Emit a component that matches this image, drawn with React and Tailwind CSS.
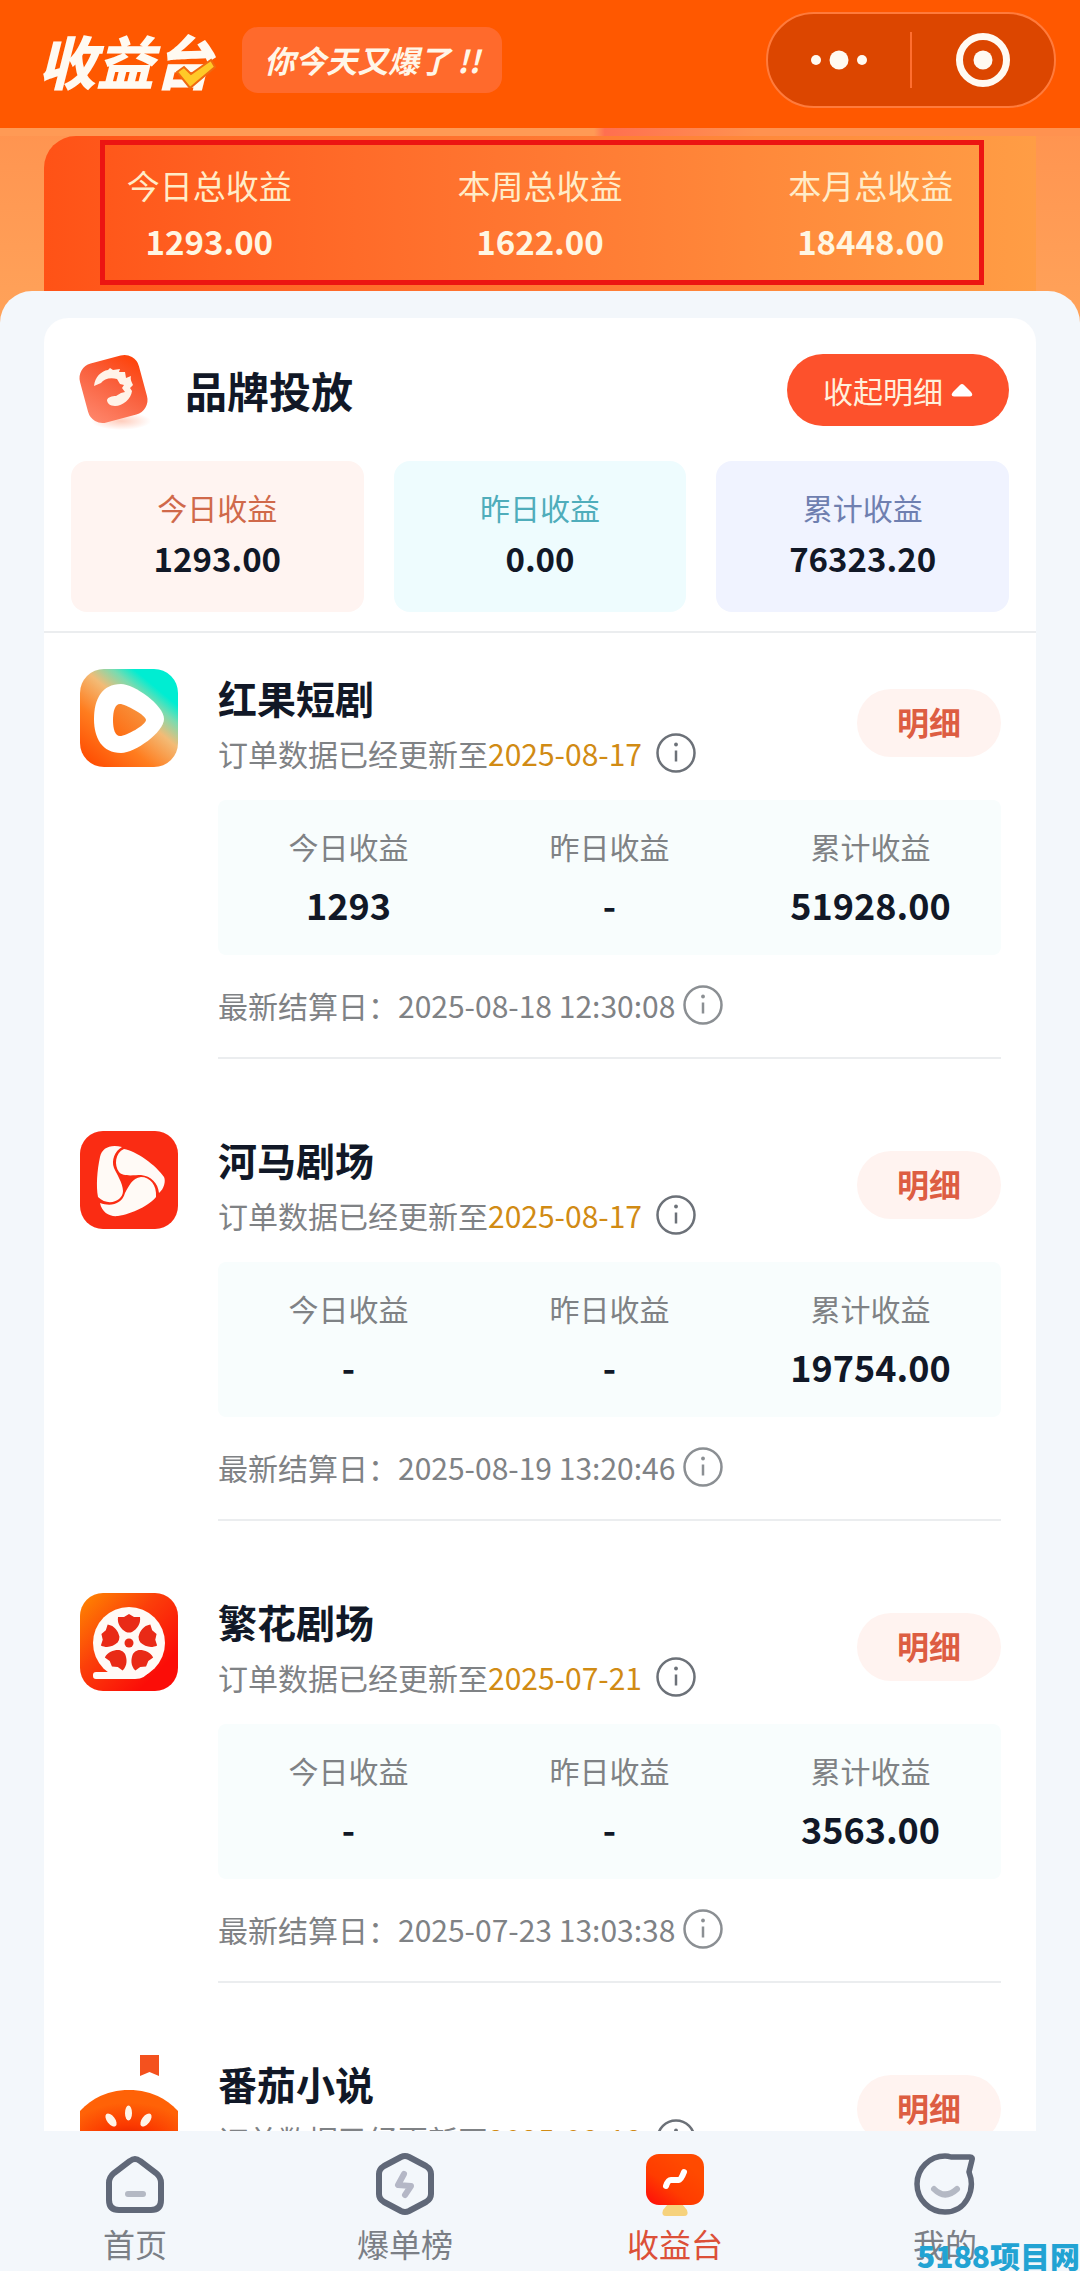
import { Fragment } from "react";

const totals = [
  { label: "今日总收益", value: "1293.00" },
  { label: "本周总收益", value: "1622.00" },
  { label: "本月总收益", value: "18448.00" },
];

const summary = [
  { label: "今日收益", value: "1293.00", box: "bg-[#fff4f1]", text: "text-[#d0694a]" },
  { label: "昨日收益", value: "0.00", box: "bg-[#eefcfe]", text: "text-[#4fadbb]" },
  { label: "累计收益", value: "76323.20", box: "bg-[#f0f3ff]", text: "text-[#6f7fb0]" },
];

const platforms = [
  {
    name: "红果短剧",
    icon: HongguoIcon,
    updated: "2025-08-17",
    figures: [["今日收益", "1293"], ["昨日收益", "-"], ["累计收益", "51928.00"]],
    settled: "2025-08-18 12:30:08",
  },
  {
    name: "河马剧场",
    icon: HemaIcon,
    updated: "2025-08-17",
    figures: [["今日收益", "-"], ["昨日收益", "-"], ["累计收益", "19754.00"]],
    settled: "2025-08-19 13:20:46",
  },
  {
    name: "繁花剧场",
    icon: FanhuaIcon,
    updated: "2025-07-21",
    figures: [["今日收益", "-"], ["昨日收益", "-"], ["累计收益", "3563.00"]],
    settled: "2025-07-23 13:03:38",
  },
  { name: "番茄小说", icon: FanqieIcon, updated: "2025-08-18" },
];

function BrandIcon() {
  return (
    <svg viewBox="0 0 80 80" className="size-20 shrink-0" aria-hidden="true">
      <defs>
        <linearGradient id="brand" x1="0" y1="1" x2="1" y2="0">
          <stop offset="0" stopColor="#ff8a70" />
          <stop offset="0.55" stopColor="#f9603d" />
          <stop offset="1" stopColor="#ff3d00" />
        </linearGradient>
        <radialGradient id="brandShadow">
          <stop offset="0" stopColor="#ff9a78" stopOpacity="0.5" />
          <stop offset="1" stopColor="#ff9a78" stopOpacity="0" />
        </radialGradient>
      </defs>
      <ellipse cx="50" cy="71" rx="30" ry="9" fill="url(#brandShadow)" />
      <rect x="12" y="8.500" width="61" height="61" rx="15" fill="url(#brand)" transform="rotate(-15 42.500 39)" />
      <path
        d="M23 36 C24 27 30 21 37 20 L39 18 L42 20 L49 19 L48 22 L54 22 L55 28 L60 26 C59 30 61 32 62 35 L59 38 L61 41 C60 49 52 56 44 56 C39 56 36 53 36 50 C37 47 41 46 45 46 L50 43 L54 42 L51 38 L53 35 L49 34 L46 29 C39 27 33 29 30 33 Z"
        fill="#fff3e8"
      />
    </svg>
  );
}

function HongguoIcon() {
  return (
    <svg viewBox="0 0 98 98" className="size-[98px]" aria-hidden="true">
      <defs>
        <linearGradient id="hongguo" x1="0.1" y1="1" x2="0.85" y2="0.1">
          <stop offset="0" stopColor="#ff4a00" />
          <stop offset="0.35" stopColor="#ff7d1f" />
          <stop offset="0.62" stopColor="#f3bb76" />
          <stop offset="0.78" stopColor="#7adbb0" />
          <stop offset="0.9" stopColor="#00edd2" />
        </linearGradient>
        <linearGradient id="hongguoPlay" x1="0" y1="1" x2="1" y2="0">
          <stop offset="0" stopColor="#ff6a10" />
          <stop offset="1" stopColor="#f59a45" />
        </linearGradient>
      </defs>
      <rect width="98" height="98" rx="24" fill="url(#hongguo)" />
      <path d="M41 15 C54 15 84 36 84 50 C84 63 55 84 41 84 C22 84 14 69 14 50 C14 30 22 15 41 15 Z" fill="#fff" />
      <path d="M40 35 C45 35 66 46 66 51 C66 56 46 67 40 67 C35 67 33 60 33 51 C33 42 35 35 40 35 Z" fill="url(#hongguoPlay)" />
    </svg>
  );
}

function HemaIcon() {
  return (
    <svg viewBox="0 0 98 98" className="size-[98px]" aria-hidden="true">
      <rect width="98" height="98" rx="23" fill="#fa2c13" />
      <g fill="#fffaf6">
        <path d="M42 16 C30 13 22 17 20 26 C17 40 16 55 18 66 C28 76 43 70 43 60 C43 52 36 42 34 37 C31 29 35 20 42 16 Z" />
        <path d="M44 18 C35 22 34 34 39 41 C43 46 54 44 61 44 C71 45 78 52 79 62 C84 58 86 50 84 46 C76 34 56 20 44 18 Z" />
        <path d="M61 46 C52 47 49 55 45 62 C42 73 31 76 20 72 C22 82 30 86 38 85 C52 83 70 74 76 66 C77 54 70 46 61 46 Z" />
      </g>
    </svg>
  );
}

function FanhuaIcon() {
  return (
    <svg viewBox="0 0 98 98" className="size-[98px]" aria-hidden="true">
      <defs>
        <linearGradient id="fanhua" x1="0" y1="0" x2="0.8" y2="0.8">
          <stop offset="0" stopColor="#ff8a00" />
          <stop offset="0.5" stopColor="#fb3f0a" />
          <stop offset="1" stopColor="#fb0d08" />
        </linearGradient>
      </defs>
      <rect width="98" height="98" rx="23" fill="url(#fanhua)" />
      <circle cx="49" cy="50" r="36" fill="#fffaf6" />
      <path d="M16 79 H60 L72 76 Q65 86 55 86 H16 Q13 86 13 83 V82 Q13 79 16 79 Z" fill="#fffaf6" />
      {[0, 72, 144, 216, 288].map((angle) => (
        <path
          key={angle}
          d="M38 24 L44 24 L49 21 L54 24 L60 24 C61 31 57 36 52 39 Q49 40 46 39 C41 36 37 31 38 24 Z"
          fill="#e92a16"
          transform={`rotate(${angle} 49 50)`}
        />
      ))}
      <circle cx="49" cy="50" r="4.500" fill="#e92a16" />
    </svg>
  );
}

function FanqieIcon() {
  return (
    <svg viewBox="0 0 98 98" className="size-[98px]" aria-hidden="true">
      <defs>
        <radialGradient id="fanqie" cx="0.5" cy="0.9" r="0.7">
          <stop offset="0" stopColor="#d81400" />
          <stop offset="0.5" stopColor="#fb3a00" />
          <stop offset="1" stopColor="#ff6207" />
        </radialGradient>
      </defs>
      <path d="M60 0 H79 V21 L69.500 17 L60 21 Z" fill="#f4511e" />
      <path d="M0 56 C14 41 31 35 49 35 C67 35 84 41 98 56 V98 H0 Z" fill="url(#fanqie)" />
      <g fill="#fff4e8">
        <ellipse cx="48.500" cy="58" rx="3.500" ry="7.500" />
        <ellipse cx="31" cy="65" rx="4" ry="7.500" transform="rotate(-38 31 65)" />
        <ellipse cx="66" cy="65" rx="4" ry="7.500" transform="rotate(38 66 65)" />
      </g>
    </svg>
  );
}

function InfoIcon() {
  return (
    <svg viewBox="0 0 40 40" className="size-10" fill="none" stroke="currentColor" aria-hidden="true">
      <circle cx="20" cy="20" r="18.500" strokeWidth="2.500" />
      <path d="M20 17.500 V28.500" strokeWidth="2.500" />
      <circle cx="20" cy="11.500" r="1.900" fill="currentColor" stroke="none" />
    </svg>
  );
}

function HomeIcon() {
  return (
    <svg viewBox="0 0 64 64" className="size-16" fill="none" strokeLinecap="round" aria-hidden="true">
      <path d="M27 9 Q32 5 37 9 L53 21 Q58 25 58 31 V48 Q58 58 48 58 H16 Q6 58 6 48 V31 Q6 25 11 21 Z" stroke="#606878" strokeWidth="6" />
      <path d="M25 42 H40" stroke="#b4b9c4" strokeWidth="6" />
    </svg>
  );
}

function RankIcon() {
  return (
    <svg viewBox="0 0 64 64" className="size-16" fill="none" strokeLinecap="round" strokeLinejoin="round" aria-hidden="true">
      <path d="M28 5 Q32 3 36 5 L53 14 Q58 17 58 22 V42 Q58 47 53 50 L36 59 Q32 61 28 59 L11 50 Q6 47 6 42 V22 Q6 17 11 14 Z" stroke="#606878" strokeWidth="6" />
      <path d="M31 22 L25 33 L38 34 L32 43" stroke="#b4b7c6" strokeWidth="6" />
    </svg>
  );
}

function IncomeIcon() {
  return (
    <svg viewBox="0 0 64 64" className="size-16" fill="none" aria-hidden="true">
      <defs>
        <linearGradient id="income" x1="0" y1="1" x2="0.7" y2="0.2">
          <stop offset="0" stopColor="#ff0a0a" />
          <stop offset="0.5" stopColor="#ff3c00" />
          <stop offset="1" stopColor="#ff4a00" />
        </linearGradient>
      </defs>
      <path d="M25 52 H39 L44 58 Q46 64 41 64 H23 Q18 64 20 58 Z" fill="#f6d27c" />
      <rect x="3" y="2" width="58" height="51" rx="13" fill="url(#income)" />
      <path d="M23 34 Q25 28 28 28 H36 Q38 28 41 20" stroke="#fff" strokeWidth="6" strokeLinecap="round" strokeLinejoin="round" />
    </svg>
  );
}

function MineIcon() {
  return (
    <svg viewBox="0 0 64 64" className="size-16" fill="none" strokeLinecap="round" strokeLinejoin="round" aria-hidden="true">
      <path d="M38 5 H57 Q60 5 59 8 L56 20 C63 38 53 60 32 60 A28 28 0 0 1 32 4 Q35 4 38 5 Z" stroke="#606878" strokeWidth="5.500" />
      <path d="M21 37 Q32 48 44 37" stroke="#b4b9c4" strokeWidth="6" />
    </svg>
  );
}

const tabs = [
  { label: "首页", icon: HomeIcon },
  { label: "爆单榜", icon: RankIcon },
  { label: "收益台", icon: IncomeIcon, active: true },
  { label: "我的", icon: MineIcon },
];

function Header() {
  return (
    <header className="flex items-center h-32 pl-[38px] pr-6 pb-2 bg-[#ff5800] shrink-0">
      <h1 className="relative text-[58px] leading-[60px] font-black italic text-[#fffaf2] whitespace-nowrap">
        收益台
        <svg viewBox="0 0 40 32" className="absolute -right-1 bottom-0 w-10 h-8" aria-hidden="true">
          <path d="M1 14 L8 9 L15 16 L35 2 L39 9 L14 30 Z" fill="#ffc928" stroke="#f06a10" strokeWidth="2" />
        </svg>
      </h1>
      <p className="ml-[30px] px-[22px] h-[66px] leading-[66px] rounded-2xl bg-[#ff6a2c] text-[31px] font-bold italic text-[#fff6e8] whitespace-nowrap">
        你今天又爆了 !!
      </p>
      <div className="ml-auto flex items-center w-[290px] h-24 rounded-full border-2 border-[#ff7b3c] bg-[#dc4600]">
        <button type="button" aria-label="更多" className="flex-1 flex justify-center">
          <svg viewBox="0 0 58 20" className="w-[58px] h-5" fill="#fffaf2">
            <circle cx="6" cy="10" r="5" />
            <circle cx="29" cy="10" r="9.500" />
            <circle cx="52" cy="10" r="5" />
          </svg>
        </button>
        <span className="w-0.5 h-14 bg-[#ff6e30]" />
        <button type="button" aria-label="关闭" className="flex-1 flex justify-center">
          <svg viewBox="0 0 56 56" className="size-14">
            <circle cx="28" cy="28" r="23.500" fill="none" stroke="#fffaf2" strokeWidth="7" />
            <circle cx="28" cy="28" r="9.500" fill="#fffaf2" />
          </svg>
        </button>
      </div>
    </header>
  );
}

function Totals() {
  return (
    <section>
      <div className="h-2 bg-linear-to-r from-[#ff9a55] from-55% via-[#ff6f50] via-56% to-[#ff9250] to-70%" />
      <div className="relative mx-11 grid grid-cols-3 h-[155px] pt-[27px] rounded-tl-[32px] text-center bg-linear-to-r from-[#ff5216] via-[#ff7832] to-[#ff9d45]">
        {totals.map((item) => (
          <div key={item.label}>
            <p className="text-[33px] leading-[44px] text-[#ffecc8]">{item.label}</p>
            <p className="mt-3 text-[33px] leading-[44px] font-bold text-[#fff6e2]">{item.value}</p>
          </div>
        ))}
        {/* Highlight frame */}
        <div className="absolute left-14 right-13 top-1 bottom-1.5 border-5 border-[#ec1512] pointer-events-none" />
      </div>
    </section>
  );
}

function Platform({ item }) {
  const Icon = item.icon;

  return (
    <li className="flex gap-10 pl-9 pr-[35px] py-9">
      <div className="shrink-0">
        <Icon />
      </div>
      <div className="flex-1 pt-1 border-b-2 border-[#ebedef]">
        <div className="flex items-center justify-between">
          <div>
            <h3 className="text-[39px] leading-12 font-bold text-[#111827]">{item.name}</h3>
            <p className="mt-3 flex items-center text-[30px] leading-10 text-[#7f8285]">
              订单数据已经更新至
              <span className="text-[#d18b14]">{item.updated}</span>
              <button type="button" aria-label="更新说明" className="ml-3.5 text-[#6c7178]">
                <InfoIcon />
              </button>
            </p>
          </div>
          <button type="button" className="w-36 h-[68px] pb-1 rounded-full bg-[#fff3f0] text-[32px] font-bold text-[#dd5d42]">
            明细
          </button>
        </div>

        {item.figures && (
          <dl className="mt-[27px] grid grid-cols-3 grid-rows-[40px_44px] grid-flow-col gap-y-4 pt-[26px] pb-[29px] rounded-lg bg-[#f8fdfd] text-center">
            {item.figures.map(([label, value]) => (
              <Fragment key={label}>
                <dt className="text-[30px] leading-10 text-[#7f8285]">{label}</dt>
                <dd className="text-[36px] leading-11 font-bold text-[#111827]">{value}</dd>
              </Fragment>
            ))}
          </dl>
        )}

        {item.settled && (
          <p className="mt-[30px] mb-8 flex items-center text-[30px] leading-10 text-[#7f8285]">
            最新结算日：{item.settled}
            <button type="button" aria-label="结算说明" className="ml-2 text-[#8b8f93]">
              <InfoIcon />
            </button>
          </p>
        )}
      </div>
    </li>
  );
}

export default function App() {
  return (
    <div className="relative flex flex-col h-screen overflow-hidden bg-[#f3f7fb] font-['Noto_Sans_CJK_SC',sans-serif]">
      <Header />

      <main className="flex-1 min-h-0 flex flex-col bg-linear-to-b from-[#ff9450] to-[#ffa35a] to-[200px]">
        <Totals />

        <div className="flex-1 min-h-0 px-11 pt-[27px] rounded-t-[32px] bg-[#f3f7fb]">
          <section className="h-full rounded-t-3xl bg-white overflow-y-auto [scrollbar-width:none]">
            {/* Brand summary */}
            <div className="pt-8 pb-[19px] px-[27px] border-b-2 border-[#ebedef]">
              <div className="flex items-center">
                <BrandIcon />
                <h2 className="ml-[34px] text-[42px] leading-12 font-bold text-[#111827]">品牌投放</h2>
                <button type="button" className="ml-auto flex items-center justify-center gap-2 w-[222px] h-[72px] rounded-full bg-[#fd512c] text-[30px] text-[#fff0dc]">
                  收起明细
                  <svg viewBox="0 0 22 14" className="w-[22px] h-3.5" aria-hidden="true">
                    <path d="M9 2 Q11 0 13 2 L20 9 Q23 13 19 13.500 H3 Q-1 13 2 9 Z" fill="#fff" />
                  </svg>
                </button>
              </div>

              <div className="mt-[31px] grid grid-cols-3 gap-[30px]">
                {summary.map((item) => (
                  <div key={item.label} className={`h-[151px] pt-6 rounded-2xl text-center ${item.box}`}>
                    <p className={`text-[30px] leading-[44px] ${item.text}`}>{item.label}</p>
                    <p className="mt-[7px] text-[33px] leading-[44px] font-bold text-[#111827]">{item.value}</p>
                  </div>
                ))}
              </div>
            </div>

            <ul>
              {platforms.map((item) => (
                <Platform key={item.name} item={item} />
              ))}
            </ul>
          </section>
        </div>
      </main>

      <nav className="grid grid-cols-4 h-[140px] pt-[21px] shrink-0 bg-[#f3f7fb]">
        {tabs.map((tab) => {
          const Icon = tab.icon;
          return (
            <a
              key={tab.label}
              href="#"
              className={`flex flex-col items-center gap-[3px] text-[32px] leading-12 ${tab.active ? "text-[#dc5038]" : "text-[#7b7f86]"}`}
            >
              <Icon />
              {tab.label}
            </a>
          );
        })}
      </nav>

      {/* Site watermark */}
      <span className="absolute right-0 bottom-0 text-[30px] leading-8 font-black text-[#22a3d3] whitespace-nowrap">
        5188<span className="border-b-2 border-[#22a3d3]">项目网</span>
      </span>
    </div>
  );
}
